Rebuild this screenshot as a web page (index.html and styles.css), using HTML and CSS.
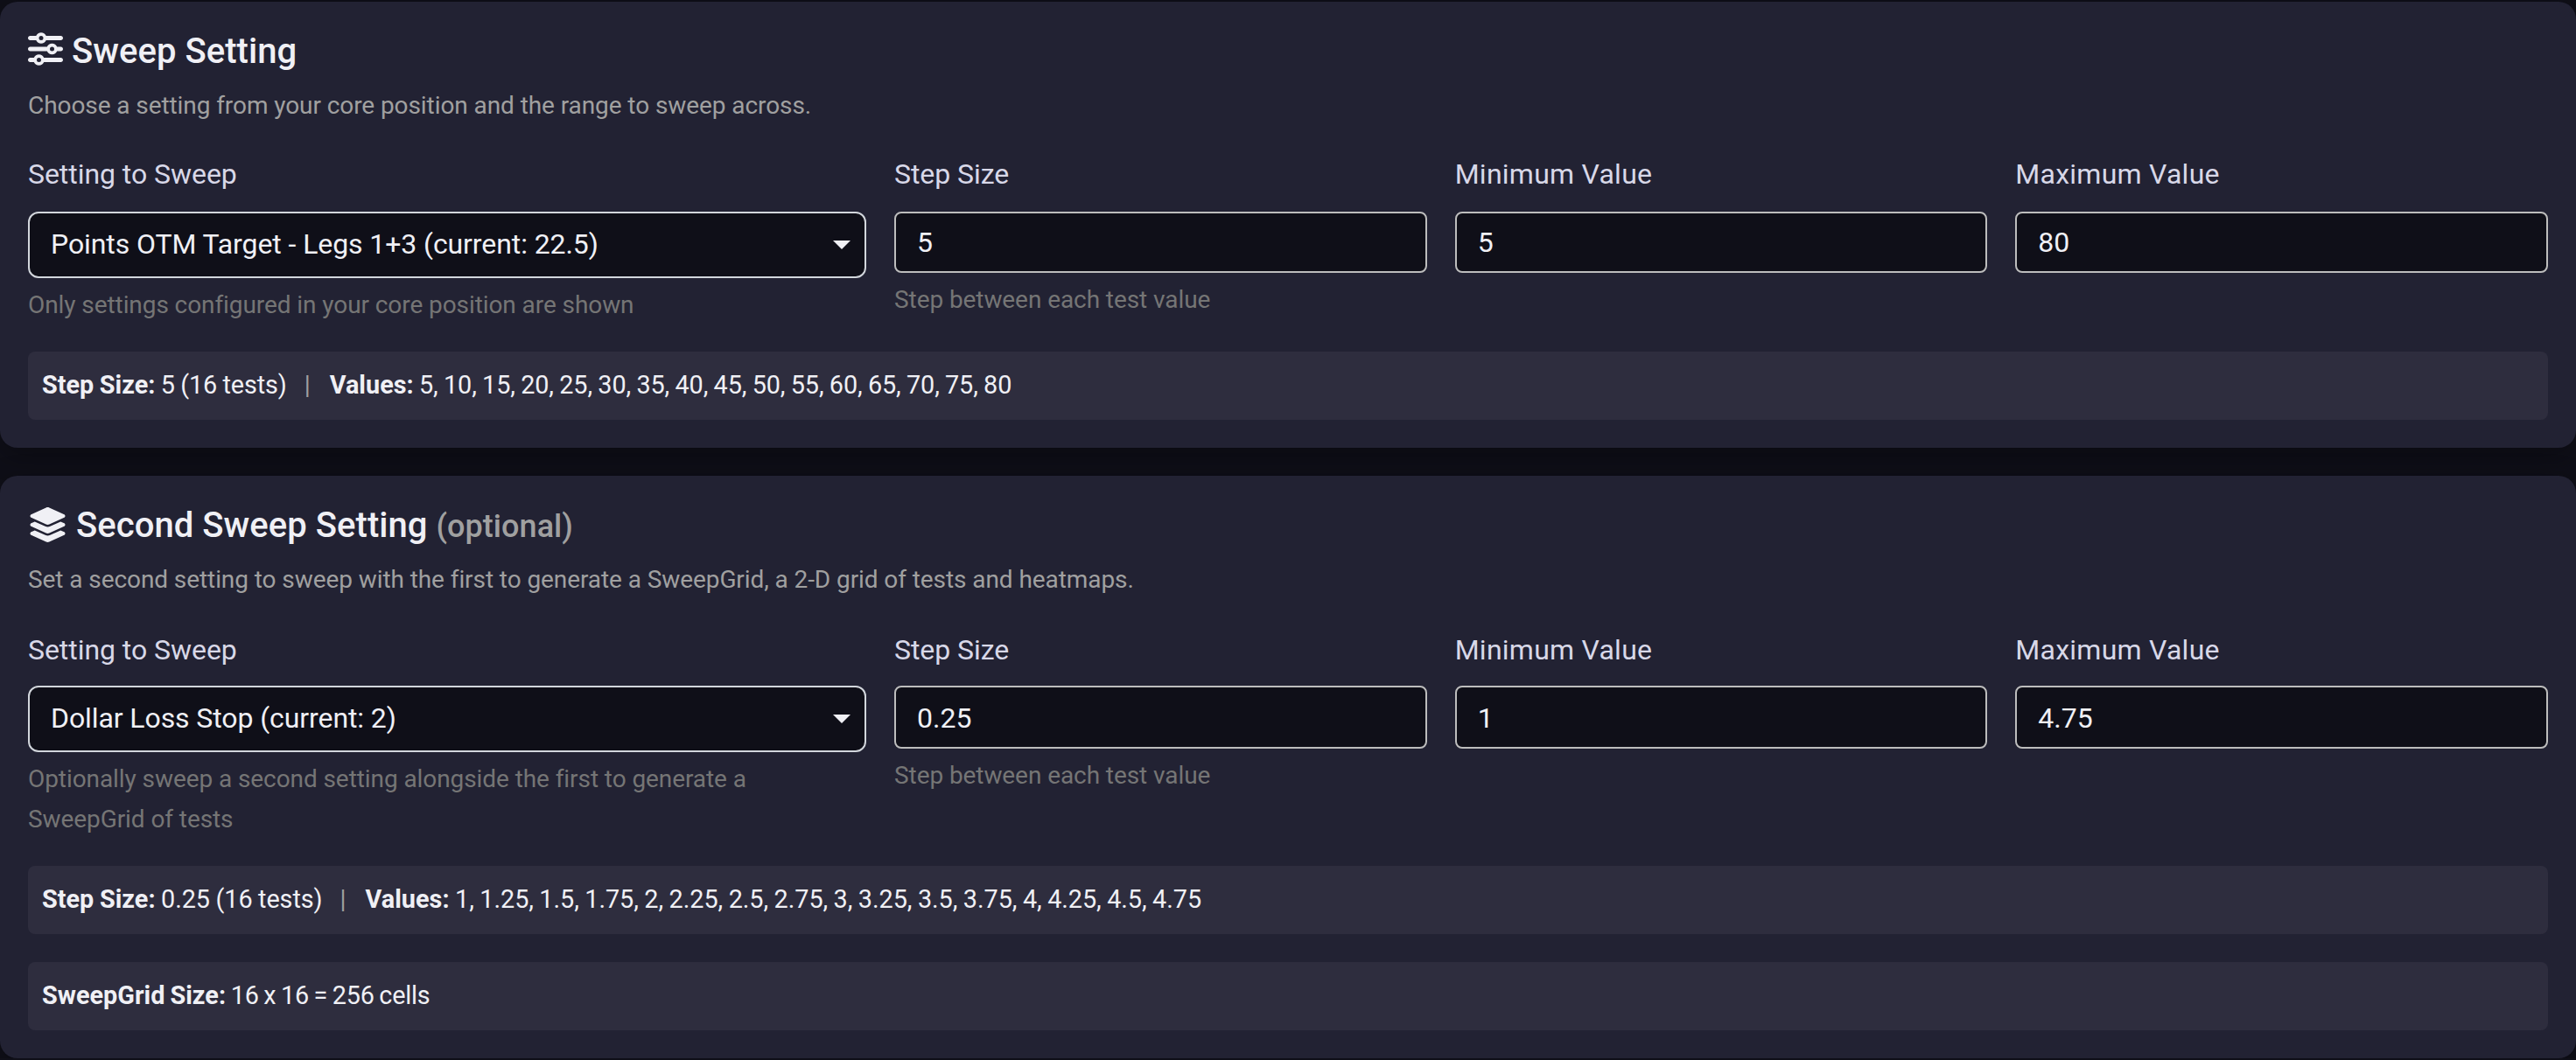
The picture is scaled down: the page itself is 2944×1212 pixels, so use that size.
FILE: index.html
```html
<!DOCTYPE html>
<html lang="en">
<head>
  <meta charset="UTF-8">
  <meta name="viewport" content="width=device-width, initial-scale=1">
  <title>Sweep Settings</title>
  <link rel="stylesheet" href="styles.css">
</head>
<body>
  <!-- First sweep -->
  <section class="card">
    <h2 class="card-title">
      <svg class="icon" viewBox="0 0 512 512"><path d="M0 416c0 17.7 14.3 32 32 32l54.7 0c12.3 28.3 40.5 48 73.3 48s61-19.7 73.3-48L480 448c17.7 0 32-14.3 32-32s-14.3-32-32-32l-246.7 0c-12.3-28.3-40.5-48-73.3-48s-61 19.7-73.3 48L32 384c-17.7 0-32 14.3-32 32zm128 0a32 32 0 1 1 64 0 32 32 0 1 1-64 0zM320 256a32 32 0 1 1 64 0 32 32 0 1 1-64 0zm32-80c-32.8 0-61 19.7-73.3 48L32 224c-17.7 0-32 14.3-32 32s14.3 32 32 32l246.7 0c12.3 28.3 40.5 48 73.3 48s61-19.7 73.3-48l54.7 0c17.7 0 32-14.3 32-32s-14.3-32-32-32l-54.7 0c-12.3-28.3-40.5-48-73.3-48zM192 128a32 32 0 1 1 0-64 32 32 0 1 1 0 64zm73.3-64C253 35.7 224.8 16 192 16s-61 19.7-73.3 48L32 64C14.3 64 0 78.3 0 96s14.3 32 32 32l86.7 0c12.3 28.3 40.5 48 73.3 48s61-19.7 73.3-48L480 128c17.7 0 32-14.3 32-32s-14.3-32-32-32L265.3 64z"/></svg>
      <span>Sweep Setting</span>
    </h2>
    <p class="card-desc">Choose a setting from your core position and the range to sweep across.</p>

    <div class="fields">
      <div class="field">
        <div class="label">Setting to Sweep</div>
        <div class="select"><span>Points OTM Target - Legs 1+3 (current: 22.5)</span><i class="caret"></i></div>
        <div class="help">Only settings configured in your core position are shown</div>
      </div>
      <div class="field">
        <div class="label">Step Size</div>
        <div class="input">5</div>
        <div class="help">Step between each test value</div>
      </div>
      <div class="field">
        <div class="label wide">Minimum Value</div>
        <div class="input">5</div>
      </div>
      <div class="field">
        <div class="label wide">Maximum Value</div>
        <div class="input">80</div>
      </div>
    </div>

    <div class="summary"><b>Step Size:</b> 5 (16 tests)<span class="sep">|</span><b>Values:</b> 5, 10, 15, 20, 25, 30, 35, 40, 45, 50, 55, 60, 65, 70, 75, 80</div>
  </section>

  <!-- Second sweep -->
  <section class="card second">
    <h2 class="card-title">
      <svg class="icon wide" viewBox="0 0 576 512"><path d="M264.5 5.2c14.9-6.9 32.1-6.9 47 0l218.6 101c8.5 3.9 13.9 12.4 13.9 21.8s-5.4 17.9-13.9 21.8l-218.6 101c-14.9 6.9-32.1 6.9-47 0L45.9 149.8C37.4 145.8 32 137.3 32 128s5.4-17.9 13.9-21.8L264.5 5.2z"/><path d="M476.9 209.6l53.2 24.6c8.5 3.9 13.9 12.4 13.9 21.8s-5.4 17.9-13.9 21.8l-218.6 101c-14.9 6.9-32.1 6.9-47 0L45.9 277.8C37.4 273.8 32 265.3 32 256s5.4-17.9 13.9-21.8l53.2-24.6 152 70.2c23.4 10.8 50.4 10.8 73.8 0l152-70.2z"/><path d="M476.9 337.6l53.2 24.6c8.5 3.9 13.9 12.4 13.9 21.8s-5.4 17.9-13.9 21.8l-218.6 101c-14.9 6.9-32.1 6.9-47 0L45.9 405.8C37.4 401.8 32 393.3 32 384s5.4-17.9 13.9-21.8l53.2-24.6 152 70.2c23.4 10.8 50.4 10.8 73.8 0l152-70.2z"/></svg>
      <span>Second Sweep Setting <small>(optional)</small></span>
    </h2>
    <p class="card-desc">Set a second setting to sweep with the first to generate a SweepGrid, a 2-D grid of tests and heatmaps.</p>

    <div class="fields">
      <div class="field">
        <div class="label">Setting to Sweep</div>
        <div class="select"><span>Dollar Loss Stop (current: 2)</span><i class="caret"></i></div>
        <div class="help">Optionally sweep a second setting alongside the first to generate a SweepGrid of tests</div>
      </div>
      <div class="field">
        <div class="label">Step Size</div>
        <div class="input">0.25</div>
        <div class="help">Step between each test value</div>
      </div>
      <div class="field">
        <div class="label wide">Minimum Value</div>
        <div class="input">1</div>
      </div>
      <div class="field">
        <div class="label wide">Maximum Value</div>
        <div class="input">4.75</div>
      </div>
    </div>

    <div class="summary"><b>Step Size:</b> 0.25 (16 tests)<span class="sep">|</span><b>Values:</b> 1, 1.25, 1.5, 1.75, 2, 2.25, 2.5, 2.75, 3, 3.25, 3.5, 3.75, 4, 4.25, 4.5, 4.75</div>
    <div class="summary grid-size"><b>SweepGrid Size:</b> 16 x 16 = 256 cells</div>
  </section>
</body>
</html>
```
FILE: styles.css
```css
* { box-sizing: border-box; }
body { margin: 0; padding-top: 2px; font-family: Roboto, "Liberation Sans", sans-serif; font-size: 32px; background: #0f0f18; color: #f0f0f5; overflow: hidden; }

/* cards */
.card { background: #222233; border-radius: 20px; padding: 32px; box-shadow: 0 8px 32px rgba(0,0,0,0.3); }
.card.second { margin-top: 32px; }
.card-title { display: flex; align-items: flex-start; gap: 10px; margin: 0; height: 48px; font-size: 40px; font-weight: 500; line-height: 50px; letter-spacing: 0.05px; }
.card-title small { font-size: 36px; color: #a0a0a0; }
.icon { width: 40px; height: 40px; margin-top: 2px; fill: currentColor; }
.icon.wide { width: 45px; margin-top: 4px; }
.card-desc { margin: 15px 0 0; height: 46px; line-height: 48px; font-size: 28px; letter-spacing: -0.08px; color: #a0a0a0; }

/* form row */
.fields { display: grid; grid-template-columns: 958px repeat(3, 1fr); gap: 32px; margin-top: 30px; }
.label { height: 51px; line-height: 53px; margin-bottom: 18px; letter-spacing: -0.05px; color: #d8d8e8; }
.label.wide { letter-spacing: 0.25px; }
.second .label { line-height: 56px; }
.select, .input { display: flex; align-items: center; background: #0f0f18; padding: 0 24px; }
.select { height: 76px; border: 2px solid #d2d6dc; border-radius: 12px; justify-content: space-between; padding-right: 16px; letter-spacing: -0.09px; }
.select span { margin-bottom: 2px; }
.input { height: 70px; border: 2px solid #bdbdbd; border-radius: 8px; }
.second .input { height: 72px; padding-top: 1px; }
.caret { border: 10px solid transparent; border-top-color: #f0f0f5; border-bottom: 0; }
.help { margin-top: 8px; line-height: 46px; font-size: 28px; letter-spacing: -0.08px; color: #757575; }

/* computed values */
.summary { height: 78px; margin-top: 30px; padding: 0 16px; border-radius: 8px; background: #2e2d3e; font-size: 28.8px; line-height: 76px; letter-spacing: -0.1px; word-spacing: -0.7px; white-space: nowrap; }
.summary b { letter-spacing: 0.03px; }
.second .summary { letter-spacing: -0.05px; word-spacing: -0.6px; }
.second .grid-size { margin-top: 32px; letter-spacing: -0.25px; word-spacing: -1.2px; }
.sep { margin: 0 22px 0 20px; color: #a0a0a0; }
```
